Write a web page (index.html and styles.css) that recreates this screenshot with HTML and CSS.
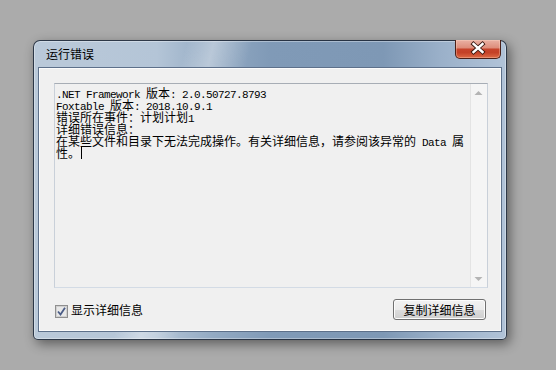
FILE: index.html
```html
<!DOCTYPE html>
<html>
<head>
<meta charset="utf-8">
<link rel="stylesheet" href="styles.css">
</head>
<body>
<div class="window">
  <div class="titlebar">
    <span class="title">运行错误</span>
    <div class="close">
      <svg width="46" height="19" viewBox="0 0 46 19">
        <path d="M18.5 5 L27.5 13 M27.5 5 L18.5 13" stroke="#3a1810" stroke-width="4.2" stroke-linecap="square" fill="none"/>
        <path d="M18.5 5 L27.5 13 M27.5 5 L18.5 13" stroke="#ffffff" stroke-width="2.4" stroke-linecap="square" fill="none"/>
      </svg>
    </div>
  </div>
  <div class="client">
    <div class="textbox">
      <div class="text">
        <div><span class="lat">.NET Framework </span>版本<span class="lat">: 2.0.50727.8793</span></div>
        <div><span class="lat">Foxtable </span>版本<span class="lat">: 2018.10.9.1</span></div>
        <div>错误所在事件：计划计划<span class="lat">1</span></div>
        <div>详细错误信息：</div>
        <div>在某些文件和目录下无法完成操作。有关详细信息，请参阅该异常的<span class="lat"> Data </span>属性。<span class="caret"></span></div>
      </div>
      <div class="scrollbar">
        <div class="sbtn">
          <svg width="17" height="17" viewBox="0 0 17 17"><path d="M4.5 11 L8.5 7 L12.5 11 Z" fill="#b4b4b4"/></svg>
        </div>
        <div class="track"></div>
        <div class="sbtn">
          <svg width="17" height="17" viewBox="0 0 17 17"><path d="M4.5 7 L8.5 11 L12.5 7 Z" fill="#b4b4b4"/></svg>
        </div>
      </div>
    </div>
    <div class="bottom">
      <label class="check">
        <span class="box">
          <svg width="13" height="13" viewBox="0 0 13 13">
            <rect x="0.5" y="0.5" width="12" height="12" fill="#f4f4f4" stroke="#8f8f8f"/>
            <rect x="1.5" y="1.5" width="10" height="10" fill="#e8e8e8" stroke="#d0d0d0"/>
            <path d="M3 6.5 L5.5 9.5 L10 2.8" stroke="#4a5c86" stroke-width="1.8" fill="none"/>
          </svg>
        </span>
        <span class="label">显示详细信息</span>
      </label>
      <button class="btn">复制详细信息</button>
    </div>
  </div>
</div>
</body>
</html>
```
FILE: styles.css
```css
body {
  margin: 0;
  width: 556px;
  height: 370px;
  box-sizing: border-box;
  overflow: hidden;
  padding: 40px 0 0 33px;
  background: #ababab;
  font-family: "Noto Sans CJK SC", sans-serif;
}

.window {
  width: 474px;
  height: 300px;
  box-sizing: border-box;
  border: 1px solid rgba(30, 40, 55, 0.9);
  border-radius: 7px 7px 5px 5px;
  padding: 0 4px 7px;
  display: flex;
  flex-direction: column;
  background:
    linear-gradient(104deg, rgba(255,255,255,0) 28%, rgba(255,255,255,0.35) 33%, rgba(255,255,255,0) 40%),
    linear-gradient(90deg, #bac9d9 0%, #b4c5d7 26%, #93aac3 38%, #809ab7 50%, #7e98b5 74%, #9ab0c9 86%, #b1c3d8 100%);
  box-shadow: 3px 4px 12px rgba(0, 0, 0, 0.45), inset 0 0 0 1px rgba(255, 255, 255, 0.35);
}

.titlebar {
  height: 26px;
  display: flex;
  align-items: center;
  padding-left: 8px;
  flex-shrink: 0;
}

.title {
  font-size: 12px;
  line-height: 12px;
  color: #000;
}

.close {
  margin-left: auto;
  margin-right: 1px;
  align-self: flex-start;
  margin-top: -1px;
  width: 46px;
  height: 19px;
  box-sizing: border-box;
  border: 1px solid #4b2018;
  border-top: none;
  border-radius: 0 0 5px 5px;
  background: linear-gradient(180deg, #eab1a4 0%, #de8e7c 42%, #c6432b 52%, #c44127 70%, #de6a45 100%);
  box-shadow: inset 0 0 0 1px rgba(255, 220, 200, 0.35);
  overflow: hidden;
}

.close svg {
  display: block;
  margin: -1px 0 0 -1px;
}

.client {
  flex: 1;
  box-sizing: border-box;
  border: 1px solid #5d708a;
  background: #f0f0f0;
  box-shadow: inset 0 0 0 1px #fbfbfb;
  padding: 15px 13px 11px 15px;
  display: flex;
  flex-direction: column;
  gap: 11px;
}

.textbox {
  height: 205px;
  box-sizing: border-box;
  border: 1px solid #c9d0d9;
  border-top-color: #a7adb5;
  border-bottom-color: #d3dbe5;
  display: flex;
  background: #f0f0f0;
}

.text {
  flex: 1;
  padding: 3px 0 0 1px;
  font-size: 12px;
  line-height: 12px;
  color: #000;
}

.lat {
  font-family: "Liberation Mono", monospace;
  font-size: 11px;
  letter-spacing: -0.6px;
  line-height: 0;
  white-space: pre-wrap;
}

.caret {
  display: inline-block;
  width: 1px;
  height: 12px;
  margin-left: 1px;
  vertical-align: top;
  background: #000;
}

.scrollbar {
  width: 17px;
  display: flex;
  flex-direction: column;
  background: #f5f5f5;
  box-shadow: inset 1px 0 0 #e4e4e4;
}

.sbtn {
  height: 17px;
}

.sbtn svg {
  display: block;
}

.track {
  flex: 1;
}

.bottom {
  height: 21px;
  display: flex;
  align-items: center;
}

.check {
  display: flex;
  align-items: center;
  gap: 3px;
  margin-left: 1px;
  font-size: 12px;
  line-height: 12px;
  color: #000;
}

.box {
  width: 13px;
  height: 13px;
  margin-top: 4px;
}

.box svg {
  display: block;
}

.btn {
  margin-left: auto;
  margin-right: 2px;
  width: 93px;
  height: 21px;
  padding: 0;
  box-sizing: border-box;
  border: 1px solid #707070;
  border-radius: 3px;
  background: linear-gradient(180deg, #f2f2f2 0%, #ebebeb 50%, #dddddd 51%, #cfcfcf 100%);
  box-shadow: inset 0 0 0 1px #fcfcfc;
  font-family: "Noto Sans CJK SC", sans-serif;
  font-size: 12px;
  line-height: 12px;
  color: #000;
}
```
